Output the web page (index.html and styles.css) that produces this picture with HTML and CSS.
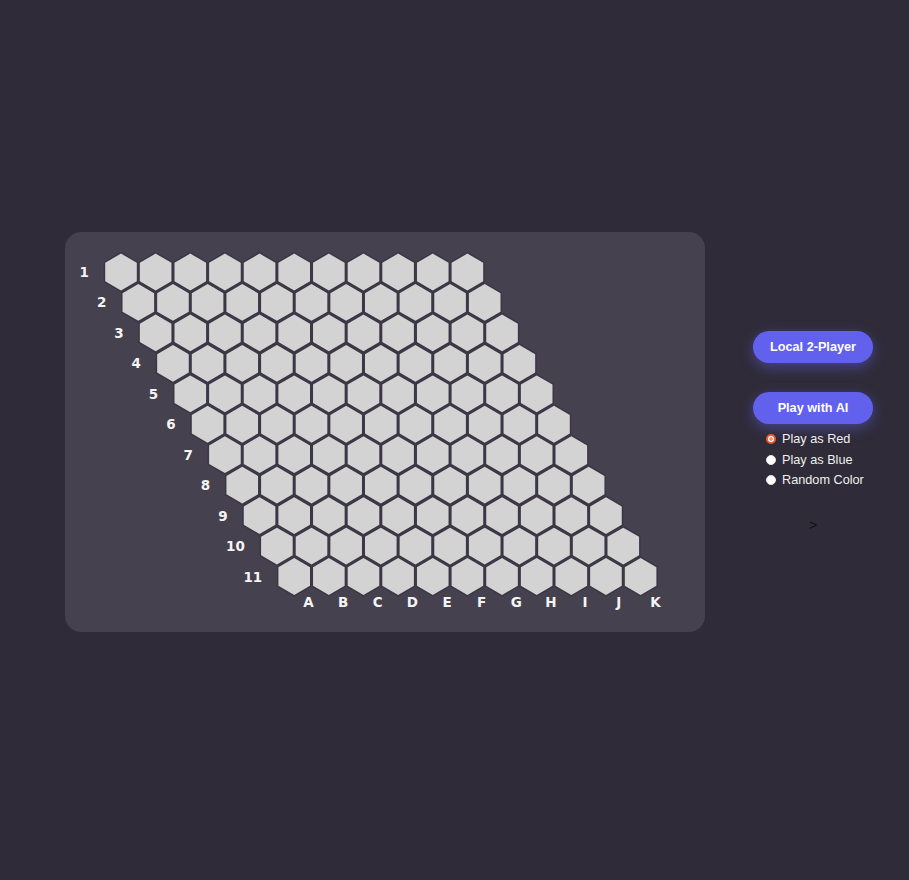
FILE: index.html
```html
<!DOCTYPE html>
<html lang="en">
<head>
<meta charset="utf-8">
<title>Hex</title>
<link rel="stylesheet" href="styles.css">
</head>
<body>
<main class="layout">
  <section class="board-panel">
    <svg class="board" width="640" height="400" viewBox="0 0 640 400">
      <defs>
        <g id="cell">
          <polygon class="cell-gap" points="0,-20.3 17.32,-10.15 17.32,10.15 0,20.3 -17.32,10.15 -17.32,-10.15"/>
          <polygon class="cell-face" points="0,-18.4 15.8,-9.2 15.8,9.2 0,18.4 -15.8,9.2 -15.8,-9.2"/>
        </g>
        <g id="row">
          <use href="#cell" x="0"/>
          <use href="#cell" x="34.64"/>
          <use href="#cell" x="69.28"/>
          <use href="#cell" x="103.92"/>
          <use href="#cell" x="138.56"/>
          <use href="#cell" x="173.2"/>
          <use href="#cell" x="207.84"/>
          <use href="#cell" x="242.48"/>
          <use href="#cell" x="277.12"/>
          <use href="#cell" x="311.76"/>
          <use href="#cell" x="346.4"/>
        </g>
      </defs>
      <use href="#row" x="56" y="40"/>
      <use href="#row" x="73.32" y="70.45"/>
      <use href="#row" x="90.64" y="100.9"/>
      <use href="#row" x="107.96" y="131.35"/>
      <use href="#row" x="125.28" y="161.8"/>
      <use href="#row" x="142.6" y="192.25"/>
      <use href="#row" x="159.92" y="222.7"/>
      <use href="#row" x="177.24" y="253.15"/>
      <use href="#row" x="194.56" y="283.6"/>
      <use href="#row" x="211.88" y="314.05"/>
      <use href="#row" x="229.2" y="344.5"/>
      <g class="row-labels">
        <text x="24" y="40">1</text>
        <text x="41.32" y="70.45">2</text>
        <text x="58.64" y="100.9">3</text>
        <text x="75.96" y="131.35">4</text>
        <text x="93.28" y="161.8">5</text>
        <text x="110.6" y="192.25">6</text>
        <text x="127.92" y="222.7">7</text>
        <text x="145.24" y="253.15">8</text>
        <text x="162.56" y="283.6">9</text>
        <text x="179.88" y="314.05">10</text>
        <text x="197.2" y="344.5">11</text>
      </g>
      <g class="col-labels">
        <text x="243.5" y="370">A</text>
        <text x="278.14" y="370">B</text>
        <text x="312.78" y="370">C</text>
        <text x="347.42" y="370">D</text>
        <text x="382.06" y="370">E</text>
        <text x="416.7" y="370">F</text>
        <text x="451.34" y="370">G</text>
        <text x="485.98" y="370">H</text>
        <text x="520.12" y="370">I</text>
        <text x="553.76" y="370">J</text>
        <text x="590.4" y="370">K</text>
      </g>
    </svg>
  </section>

  <aside class="controls">
    <button class="pill-btn" type="button">Local 2-Player</button>
    <button class="pill-btn ai-btn" type="button">Play with AI</button>
    <div class="color-options">
      <label class="option"><input type="radio" name="color" checked><span>Play as Red</span></label>
      <label class="option"><input type="radio" name="color"><span>Play as Blue</span></label>
      <label class="option"><input type="radio" name="color"><span>Random Color</span></label>
    </div>
    <div class="toggle">&gt;</div>
  </aside>
</main>
</body>
</html>
```

FILE: styles.css
```css
* {
  box-sizing: border-box;
}

html, body {
  margin: 0;
  padding: 0;
}

body {
  background: #2f2b38;
  font-family: "Liberation Sans", Arial, sans-serif;
  min-height: 100vh;
}

.layout {
  display: flex;
  align-items: center;
  gap: 48px;
  padding: 232px 0 0 65px;
}

.board-panel {
  width: 640px;
  height: 400px;
  background: #46414f;
  border-radius: 16px;
  flex: none;
}

.board {
  display: block;
}

.cell-gap {
  fill: #3c3745;
}

.cell-face {
  fill: #d3d3d3;
}

.row-labels text,
.col-labels text {
  font-family: "DejaVu Sans", sans-serif;
  font-weight: bold;
  font-size: 13.5px;
  fill: #f4f4f4;
  dominant-baseline: central;
}

.row-labels text {
  text-anchor: end;
}

.col-labels text {
  text-anchor: middle;
}

.controls {
  width: 120px;
  display: flex;
  flex-direction: column;
  flex: none;
}

.pill-btn {
  width: 120px;
  height: 32px;
  border: none;
  border-radius: 16px;
  background: #6161ee;
  color: #ffffff;
  font-family: "Liberation Sans", Arial, sans-serif;
  font-weight: bold;
  font-size: 12.7px;
  padding: 0;
  box-shadow: 0 4px 14px rgba(99, 102, 241, 0.45);
}

.ai-btn {
  margin-top: 29px;
}

.color-options {
  display: flex;
  flex-direction: column;
  padding: 5px 0 0 13px;
}

.option {
  display: flex;
  align-items: center;
  gap: 6px;
  height: 20.5px;
  color: #f0f0f0;
  font-size: 12.7px;
  white-space: nowrap;
}

.option input {
  appearance: none;
  -webkit-appearance: none;
  margin: 0;
  width: 10px;
  height: 10px;
  border-radius: 50%;
  background: #ffffff;
  border: 1px solid #e6e6e6;
  flex: none;
}

.option input:checked {
  border: 2px solid #ec5b2b;
  background: radial-gradient(circle, #f08a64 0 1.4px, #ffffff 2px);
}

.toggle {
  margin-top: 27px;
  text-align: center;
  color: #111111;
  font-size: 14px;
  line-height: 16px;
}
```
